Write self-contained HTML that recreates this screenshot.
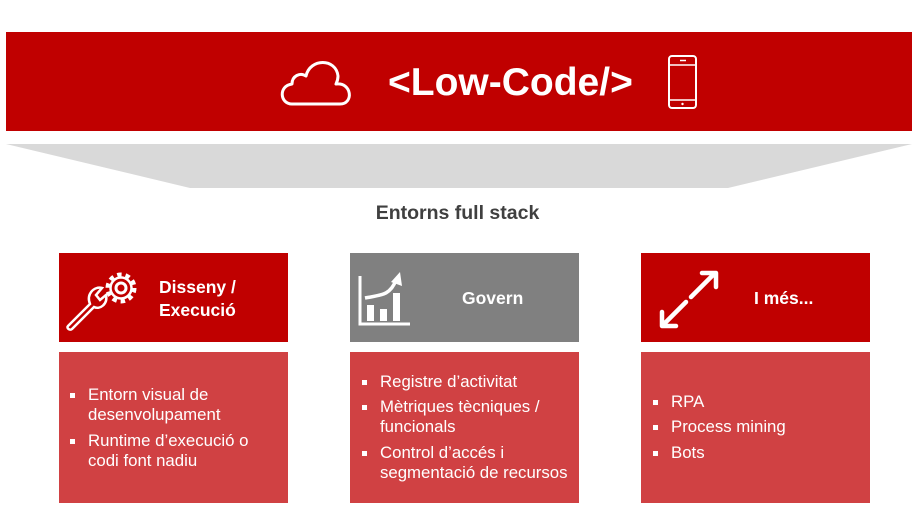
<!DOCTYPE html>
<html><head><meta charset="utf-8"><style>
body{margin:0;width:919px;height:526px;background:#fff;position:relative;font-family:"Liberation Sans",Arial,sans-serif;overflow:hidden}
.a{position:absolute}
.t{position:absolute;color:#fff;font-size:16.8px;line-height:20px;white-space:nowrap}
.b{position:absolute;width:5px;height:5px;background:#fff}
.h{position:absolute;color:#fff;font-weight:bold;font-size:17.5px;line-height:23px}
</style></head><body>
<div class="a" style="left:6px;top:32px;width:906px;height:99px;background:#c00000"></div>
<svg class="a" style="left:0;top:0" width="919" height="526">
<polygon points="6,144 912,144 728,188 190,188" fill="#d9d9d9"/>
<path d="M292,104 C280,104 278,86 292,84 C292,76 300,72 306,76 C310,58 336,58 338,76 C338,80 337,82 336,84 C352,82 354,104 340,104 Z" fill="none" stroke="#fff" stroke-width="3" stroke-linejoin="round"/>
<rect x="669" y="56" width="27" height="52" rx="3" fill="none" stroke="#fff" stroke-width="2"/>
<line x1="669" y1="65" x2="696" y2="65" stroke="#fff" stroke-width="1.5"/>
<line x1="669" y1="100" x2="696" y2="100" stroke="#fff" stroke-width="1.5"/>
<line x1="680" y1="60.5" x2="686" y2="60.5" stroke="#fff" stroke-width="1.5"/>
<circle cx="682.5" cy="104" r="1.2" fill="#fff"/>
</svg>
<div class="a" style="left:388px;top:60px;font-size:39px;font-weight:bold;color:#fff;line-height:46px">&lt;Low-Code/&gt;</div>
<div class="a" style="left:0;width:919px;top:202px;text-align:center;font-size:19.5px;font-weight:bold;color:#404040"><span style="position:relative;left:-2px">Entorns full stack</span></div>

<div class="a" style="left:59px;top:253px;width:229px;height:89px;background:#c00000"></div>
<div class="a" style="left:350px;top:253px;width:229px;height:89px;background:#808080"></div>
<div class="a" style="left:641px;top:253px;width:229px;height:89px;background:#c00000"></div>
<div class="a" style="left:59px;top:352px;width:229px;height:151px;background:#d04143"></div>
<div class="a" style="left:350px;top:352px;width:229px;height:151px;background:#d04143"></div>
<div class="a" style="left:641px;top:352px;width:229px;height:151px;background:#d04143"></div>

<svg class="a" style="left:0;top:0" width="919" height="526" fill="none" stroke="#fff">
<circle cx="121" cy="288" r="5" stroke-width="3"/>
<circle cx="121" cy="288" r="13.5" stroke-width="4" stroke-dasharray="4.5 4"/>
<circle cx="121" cy="288" r="10.5" stroke-width="2.5"/>
<path d="M68,326 L90,304 C86,294 94,286 102,288 L96,295 L100,300 L106,295 C108,304 100,310 94,307 L72,329 C70,331 66,328 68,326 Z" stroke-width="2.5"/>
<path d="M360,276 L360,324 L410,324" stroke-width="3"/>
<rect x="367" y="305" width="7" height="16" fill="#fff" stroke="none"/>
<rect x="380" y="309" width="7" height="12" fill="#fff" stroke="none"/>
<rect x="393" y="293" width="7" height="28" fill="#fff" stroke="none"/>
<path d="M365,298 C380,295 390,296 396,280" stroke-width="3.5"/>
<polygon points="391,282 400,272 402,286" fill="#fff" stroke="none"/>
<path d="M662,326 L686,302 M691,297 L715,273 M702,273 L716,273 L716,287 M662,312 L662,326 L676,326" stroke-width="4.5" stroke-linecap="round" stroke-linejoin="round"/>
</svg>

<div class="h" style="left:159px;top:276px">Disseny /<br>Execució</div>
<div class="h" style="left:462px;top:287px">Govern</div>
<div class="h" style="left:754px;top:287px">I més...</div>

<div class="b" style="left:70px;top:393px"></div>
<div class="t" style="left:88px;top:385px">Entorn visual de<br>desenvolupament</div>
<div class="b" style="left:70px;top:439px"></div>
<div class="t" style="left:88px;top:431px">Runtime d’execució o<br>codi font nadiu</div>

<div class="b" style="left:362px;top:380px"></div>
<div class="t" style="left:380px;top:372px">Registre d’activitat</div>
<div class="b" style="left:362px;top:405px"></div>
<div class="t" style="left:380px;top:397px">Mètriques tècniques /<br>funcionals</div>
<div class="b" style="left:362px;top:451px"></div>
<div class="t" style="left:380px;top:443px">Control d’accés i<br>segmentació de recursos</div>

<div class="b" style="left:653px;top:400px"></div>
<div class="t" style="left:671px;top:392px">RPA</div>
<div class="b" style="left:653px;top:425px"></div>
<div class="t" style="left:671px;top:417px">Process mining</div>
<div class="b" style="left:653px;top:451px"></div>
<div class="t" style="left:671px;top:443px">Bots</div>
</body></html>
